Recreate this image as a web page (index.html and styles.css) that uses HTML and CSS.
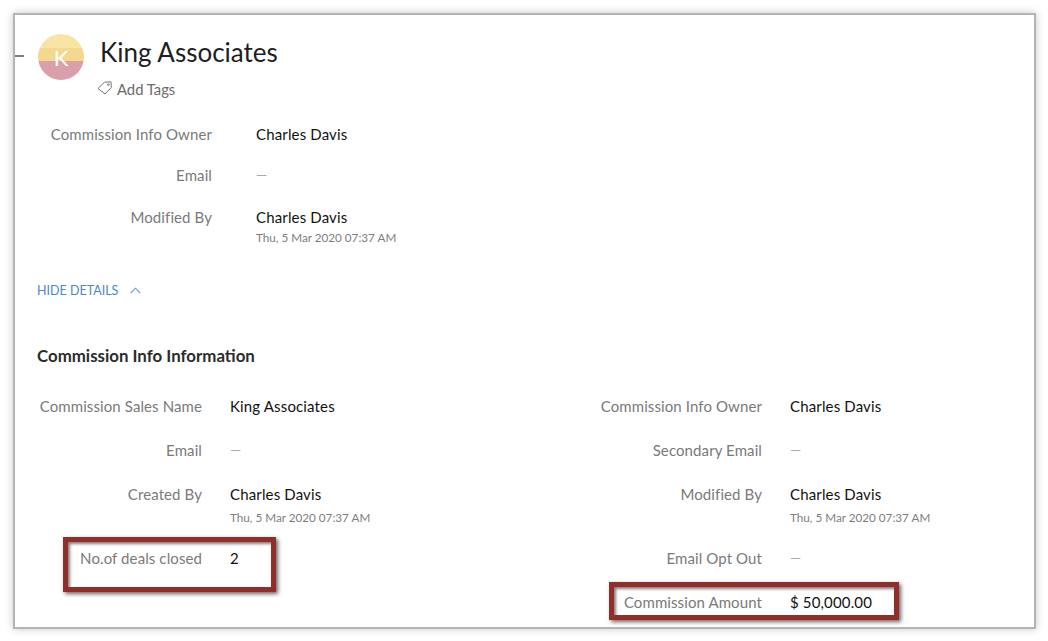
FILE: index.html
```html
<!DOCTYPE html>
<html lang="en">
<head>
<meta charset="utf-8">
<title>King Associates</title>
<link rel="stylesheet" href="styles.css">
</head>
<body>
<main class="card">
  <span class="tick"></span>
  <header class="head">
    <div class="avatar">K</div>
    <div class="head-text">
      <h1 class="title">King Associates</h1>
      <div class="tags">
        <svg class="tag-icon" width="16" height="14" viewBox="0 0 16 14" fill="none" stroke="#777" stroke-width="1"><path d="M1 7.5 7.5 1.2 14 .8 14.3 6.5 8 13Z" stroke-linejoin="round"/><circle cx="11.4" cy="3.6" r=".9"/></svg>
        <span>Add Tags</span>
      </div>
    </div>
  </header>

  <section class="summary">
    <div class="row row-a"><span class="label">Commission Info Owner</span><span class="value">Charles Davis</span></div>
    <div class="row row-b"><span class="label">Email</span><span class="dash">—</span></div>
    <div class="row row-c">
      <span class="label">Modified By</span>
      <div class="value">Charles Davis<small class="stamp">Thu, 5 Mar 2020 07:37 AM</small></div>
    </div>
  </section>

  <div class="toggle">
    <span>HIDE DETAILS</span>
    <svg width="11" height="7" viewBox="0 0 11 7" fill="none" stroke="#6d9bd0" stroke-width="1.1"><path d="M.8 6 5.5 1.2 10.2 6"/></svg>
  </div>

  <h2 class="section-title">Commission Info Information</h2>

  <section class="details">
    <div class="column">
      <div class="row h-1"><span class="label">Commission Sales Name</span><span class="value">King Associates</span></div>
      <div class="row h-2"><span class="label">Email</span><span class="dash">—</span></div>
      <div class="row h-3"><span class="label">Created By</span><div class="value">Charles Davis<small class="stamp">Thu, 5 Mar 2020 07:37 AM</small></div></div>
      <div class="row h-4"><span class="label">No.of deals closed</span><span class="value">2</span></div>
    </div>
    <div class="column">
      <div class="row h-1"><span class="label">Commission Info Owner</span><span class="value">Charles Davis</span></div>
      <div class="row h-2"><span class="label">Secondary Email</span><span class="dash">—</span></div>
      <div class="row h-3"><span class="label">Modified By</span><div class="value">Charles Davis<small class="stamp">Thu, 5 Mar 2020 07:37 AM</small></div></div>
      <div class="row h-4"><span class="label">Email Opt Out</span><span class="dash">—</span></div>
      <div class="row h-5"><span class="label">Commission Amount</span><span class="value">$ 50,000.00</span></div>
    </div>
  </section>

  <span class="mark mark-deals"></span>
  <span class="mark mark-amount"></span>
</main>
</body>
</html>
```

FILE: styles.css
```css
* { box-sizing: border-box; }

html, body { height: 100%; }

body {
  margin: 0;
  background: #fff;
  font-family: Lato, "Open Sans", sans-serif;
  overflow: hidden;
}

.card {
  position: relative;
  width: 1023px;
  height: 616px;
  margin: 13px 0 0 13px;
  padding: 19px 0 0 22px;
  background: #fff;
  border: 2px solid #b4b4b4;
  box-shadow: 0 0 8px rgba(0, 0, 0, .22);
  overflow: hidden;
}

.tick {
  position: absolute;
  left: 0;
  top: 40px;
  width: 9px;
  height: 2px;
  background: #808080;
}

.head { display: flex; gap: 16px; margin-left: 1px; }

.avatar {
  width: 46px;
  height: 46px;
  border-radius: 50%;
  background: linear-gradient(#f9e5a3 0, #f9e5a3 14px, #f5d88f 14px, #f5d88f 27px, #d9a0ab 27px);
  color: #fff;
  font-size: 22px;
  font-weight: 400;
  line-height: 48px;
  text-align: center;
}

.title {
  margin: 1px 0 0;
  font-size: 26px;
  font-weight: 400;
  line-height: 34px;
  color: #1f1f1f;
}

.tags {
  display: flex;
  align-items: center;
  gap: 4px;
  margin: 10px 0 0 -3px;
  font-size: 14.8px;
  line-height: 20px;
  color: #6b6b6b;
}

.tag-icon { margin-top: -3px; }

.row { display: flex; }

.label {
  flex: none;
  text-align: right;
  font-size: 15px;
  letter-spacing: .1px;
  line-height: 20px;
  color: #7a7a7a;
}

.value {
  font-size: 15px;
  letter-spacing: .15px;
  line-height: 20px;
  color: #111;
}

.dash {
  font-size: 14px;
  line-height: 20px;
  color: #aaa;
}

.stamp {
  display: block;
  margin-top: 3px;
  font-size: 11.7px;
  letter-spacing: 0;
  line-height: 14px;
  color: #7d7d7d;
}

.summary { margin-top: 25px; }
.summary .row { gap: 44px; }
.summary .label { width: 175px; }
.row-a { height: 41px; }
.row-b { height: 42px; }
.row-c { height: 63px; }

.toggle {
  display: flex;
  align-items: center;
  gap: 12px;
  margin-top: 10px;
  height: 20px;
  font-size: 12.5px;
  color: #4f87c6;
}

.section-title {
  margin: 44px 0 0;
  font-size: 16.85px;
  font-weight: 700;
  line-height: 24px;
  color: #2b2b2b;
}

.details {
  display: grid;
  grid-template-columns: 560px 400px;
  margin-top: 28px;
}

.details .row { gap: 28px; }
.details .label { width: 165px; }
.details .stamp { margin-top: 6px; }
.h-1 { height: 44px; }
.h-2 { height: 44px; }
.h-3 { height: 64px; }
.h-4 { height: 44px; }
.h-5 { height: 30px; }

.mark {
  position: absolute;
  border: 5px solid #922e2a;
  box-shadow: 2px 2px 4px rgba(0, 0, 0, .6), inset 2px 2px 3px rgba(0, 0, 0, .5);
}

.mark-deals {
  left: 48px;
  top: 522px;
  width: 213px;
  height: 55px;
}

.mark-amount {
  left: 594px;
  top: 567px;
  width: 290px;
  height: 38px;
}
```
